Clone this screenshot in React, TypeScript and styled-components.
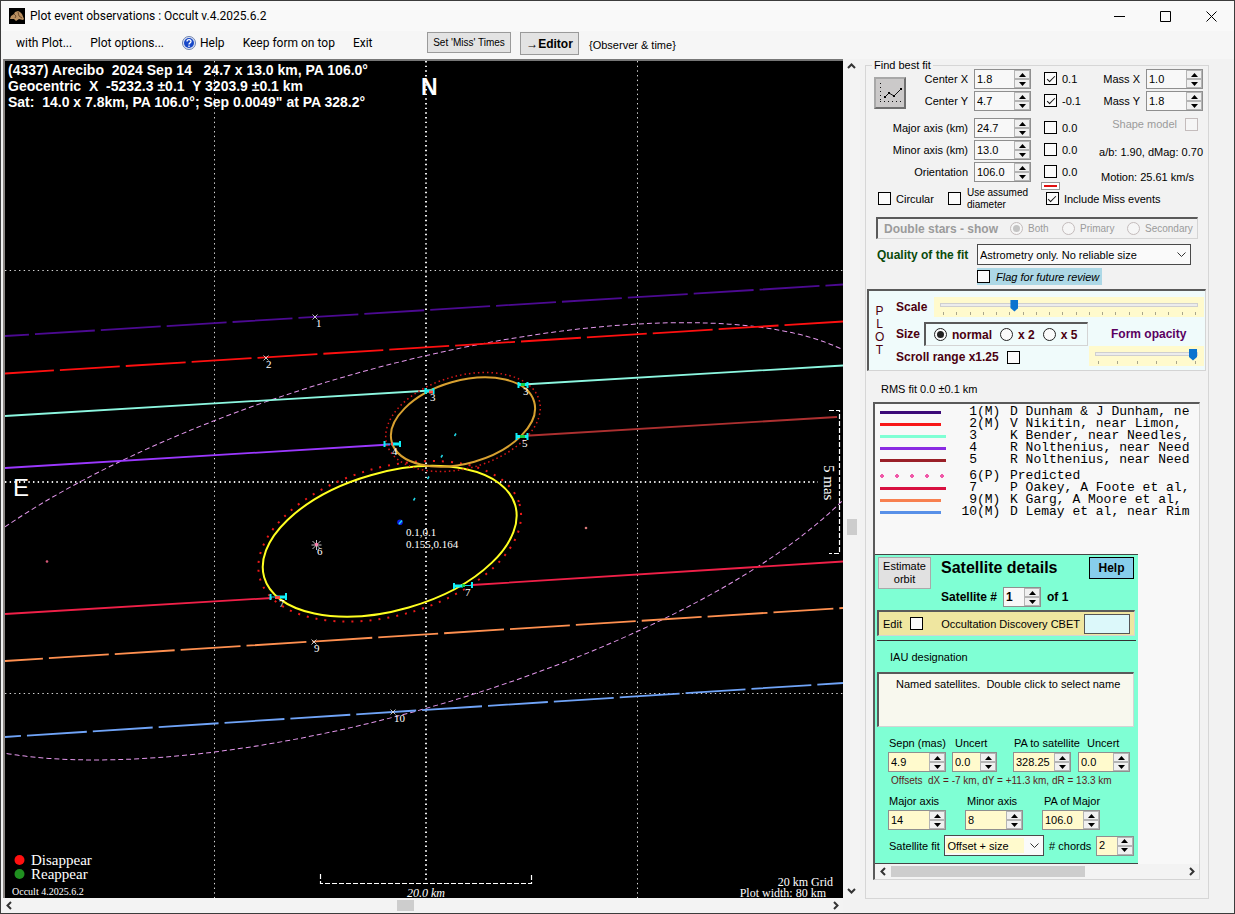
import React from "react";
import styled, { createGlobalStyle, css } from "styled-components";

const sans = '"Liberation Sans", Arial, sans-serif';
const serif = '"Liberation Serif", "Times New Roman", serif';
const mono = '"Liberation Mono", "Courier New", monospace';
const ui = 'Roboto, "Segoe UI", sans-serif';

const GlobalStyle = createGlobalStyle`
  *, *::before, *::after { box-sizing: border-box; }
  html, body { margin: 0; padding: 0; }
  body { background: #f2f2f2; color: #000; font: 11px/12px ${sans}; }
  button, input, select { font: inherit; color: inherit; margin: 0; }
`;

/* ---------- window frame ---------- */

const Window = styled.div`
  display: flex;
  flex-direction: column;
  min-height: 100vh;
  border: 1px solid #3c3c3c;
  background: #f2f2f2;
`;

const TitleBar = styled.header`
  display: flex;
  align-items: center;
  height: 30px;
  padding-left: 8px;
  background: #f9f9f9;
`;

const WindowTitle = styled.h1`
  flex: 1;
  margin: 0 0 0 5px;
  font: 400 12px/16px ${ui};
`;

const CaptionButton = styled.button`
  display: flex;
  align-items: center;
  justify-content: center;
  width: 46px;
  height: 28px;
  padding: 0;
  border: 0;
  background: transparent;
`;

const MenuBar = styled.div`
  display: flex;
  align-items: flex-start;
  height: 28px;
  background: #f6f6f6;
`;

const Menu = styled.nav`
  display: flex;
  gap: 18px;
  width: 426px;
  padding-left: 15px;
`;

const MenuItem = styled.button`
  display: flex;
  align-items: center;
  gap: 4px;
  height: 24px;
  padding: 0;
  border: 0;
  background: transparent;
  font: 12px/16px ${ui};
  white-space: nowrap;
`;

const ToolButton = styled.button<{ $strong?: boolean }>`
  height: ${(p) => (p.$strong ? 23 : 21)}px;
  width: ${(p) => (p.$strong ? 59 : 84)}px;
  margin: 1px 9px 0 0;
  padding: 0;
  border: 1px solid #9a9a9a;
  background: #e3e3e3;
  font: ${(p) => (p.$strong ? "700 12px" : "400 10px")} / 14px ${sans};
  white-space: nowrap;
`;

const MenuHint = styled.span`
  padding: 8px 0 0 1px;
`;

/* ---------- main area ---------- */

const Main = styled.main`
  display: flex;
  flex: 1;
`;

const PlotColumn = styled.section`
  display: grid;
  flex: 1;
  min-width: 0;
  grid-template-columns: minmax(0, 1fr) 17px;
  grid-template-rows: minmax(0, 1fr) 15px;
`;

const PlotFrame = styled.div`
  margin-left: 2px;
  border-top: 2px solid #777;
  border-left: 2px solid #8a8683;
  background: #000;
`;

const Chart = styled.svg`
  display: block;
  width: 100%;
  height: 100%;
  text { white-space: pre; fill: #fff; }
`;

const ScrollTrack = styled.div<{ $vertical?: boolean }>`
  display: flex;
  flex-direction: ${(p) => (p.$vertical ? "column" : "row")};
  align-items: center;
  background: #f3f3f3;
`;

const ScrollArrow = styled.button`
  display: flex;
  flex: none;
  align-items: center;
  justify-content: center;
  width: 16px;
  height: 15px;
  padding: 0;
  border: 0;
  background: transparent;
`;

const ScrollGap = styled.div<{ $grow: number }>`
  flex: ${(p) => p.$grow} 0 0;
`;

const Thumb = styled.div<{ $vertical?: boolean; $length: number }>`
  flex: none;
  width: ${(p) => (p.$vertical ? 10 : p.$length)}px;
  height: ${(p) => (p.$vertical ? p.$length : 11)}px;
  background: #cdcdcd;
`;

const Side = styled.aside`
  flex: none;
  padding: 2px 25px 12px 5px;
`;

const FitGroup = styled.fieldset`
  width: 344px;
  min-width: 0;
  margin: 0;
  padding: 0 2px 18px 1px;
  border: 1px solid #d6d6d6;
`;

const GroupLegend = styled.legend`
  margin-left: 5px;
  padding: 0 2px;
  line-height: 8px;
`;

/* ---------- controls ---------- */

const Spin = styled.span<{ $width: number; $tint?: string }>`
  display: flex;
  flex: none;
  width: ${(p) => p.$width}px;
  height: 20px;
  border: 1px solid #8f8f8f;
  background: ${(p) => p.$tint ?? "#f8f8f8"};
`;

const SpinInput = styled.input`
  flex: 1;
  min-width: 0;
  height: 17px;
  padding: 0 0 0 2px;
  border: 0;
  outline: 0;
  background: transparent;
`;

const SpinKeys = styled.span`
  display: flex;
  flex-direction: column;
  flex: none;
  width: 16px;
`;

const SpinKey = styled.button`
  display: flex;
  flex: 1;
  align-items: center;
  justify-content: center;
  padding: 0;
  border: 1px solid #b4b4b4;
  background: #f0f0f0;
`;

const boxLook = css`
  appearance: none;
  display: inline-grid;
  place-content: center;
  flex: none;
  width: 13px;
  height: 13px;
  border: 1px solid #000;
  background: #fbfbfb;
  &:disabled { border-color: #c4bcbc; background: #f6f6f6; }
`;

const CheckBox = styled.input.attrs({ type: "checkbox" })`
  ${boxLook}
  &:checked::before {
    content: "";
    width: 8px;
    height: 4px;
    border: solid #111;
    border-width: 0 0 1px 1px;
    transform: translateY(-1px) rotate(-45deg);
  }
`;

const Radio = styled.input.attrs({ type: "radio" })`
  ${boxLook}
  border-radius: 50%;
  border-color: #222;
  &:checked::before {
    content: "";
    width: 7px;
    height: 7px;
    border-radius: 50%;
    background: #222;
  }
  &:checked:disabled::before { background: #c4c4c4; }
`;

const Tick = styled.label<{ $gap?: number; $muted?: boolean }>`
  display: flex;
  align-items: center;
  gap: ${(p) => p.$gap ?? 5}px;
  white-space: nowrap;
  color: ${(p) => (p.$muted ? "#9b9b9b" : "inherit")};
`;

const Combo = styled.span<{ $width: number; $tint?: string }>`
  display: grid;
  flex: none;
  align-items: center;
  width: ${(p) => p.$width}px;
  height: 21px;
  border: 1px solid #4a4a4a;
  background: ${(p) =>
    p.$tint
      ? `linear-gradient(${p.$tint}, ${p.$tint}) 1px 2px / calc(100% - 20px) 15px no-repeat #fafafa`
      : "#fafafa"};
  > * { grid-area: 1 / 1; }
  > svg { justify-self: end; margin-right: 4px; pointer-events: none; }
`;

const ComboSelect = styled.select`
  appearance: none;
  width: 100%;
  height: 19px;
  padding: 0 2px;
  border: 0;
  outline: 0;
  background: transparent;
`;

const Sunken = css`
  border: 1px solid #d4d4d4;
  border-top: 2px solid #5a5a5a;
  border-left: 2px solid #5a5a5a;
`;

/* ---------- best-fit controls ---------- */

const FitGrid = styled.div`
  display: grid;
  grid-template-columns: 32px 62px 57px 52px 1fr;
  grid-template-rows: 20px 25px 20px 20px 20px;
  row-gap: 2px;
  padding: 0 3px 0 7px;
`;

const FitButton = styled.button`
  grid-column: 1;
  grid-row: 1 / 3;
  align-self: center;
  width: 32px;
  height: 32px;
  padding: 0;
  border: 2px solid;
  border-color: #a8a8a8 #6f6f6f #6f6f6f #a8a8a8;
  background: #cbc9c9;
`;

const FieldLabel = styled.label<{ $wide?: boolean }>`
  grid-column: ${(p) => (p.$wide ? "1 / 3" : "2")};
  justify-self: end;
  line-height: 20px;
  white-space: nowrap;
`;

const FitSpin = styled.div`
  grid-column: 3;
  margin-left: 6px;
`;

const FitCheck = styled.div`
  display: flex;
  grid-column: 4;
  height: 19px;
  margin-left: 19px;
`;

const FitExtra = styled.div<{ $drop?: number }>`
  display: flex;
  grid-column: 5;
  align-items: center;
  justify-content: flex-end;
  gap: 6px;
  height: 20px;
  margin-top: ${(p) => p.$drop ?? 0}px;
  white-space: nowrap;
`;

const ShapeLabel = styled(Tick)`
  padding: 0 5px 8px 0;
`;

const Motion = styled.span`
  padding-right: 9px;
`;

const OptionRow = styled.div`
  display: flex;
  align-items: flex-end;
  height: 29px;
  padding-left: 11px;
  > label { height: 25px; }
`;

const AssumedOption = styled(Tick)`
  width: 93px;
  margin-left: 14px;
  font-size: 10px;
  white-space: normal;
`;

const MissOption = styled.div`
  display: flex;
  flex-direction: column;
  align-self: flex-start;
  gap: 2px;
`;

const MissTick = styled(Tick)`
  padding-left: 5px;
`;

const LineSwatch = styled.span`
  flex: none;
  width: 19px;
  height: 8px;
  border: 1px solid #999;
  background: linear-gradient(#e01010, #e01010) center / 13px 2px no-repeat #fff;
`;

const DoubleStars = styled.div`
  ${Sunken}
  display: flex;
  align-items: center;
  height: 22px;
  margin: 6px 8px 0 9px;
  padding-left: 6px;
  color: #9b9b9b;
  strong { width: 126px; font-size: 12px; white-space: nowrap; }
  label { font-size: 10px; }
`;

const RadioSlot = styled(Tick)<{ $width: number }>`
  width: ${(p) => p.$width}px;
`;

const QualityRow = styled.div`
  display: flex;
  align-items: center;
  justify-content: space-between;
  margin: 5px 15px 0 10px;
  label { color: #0b4a0b; font-weight: 700; font-size: 12px; white-space: nowrap; }
`;

const FlagOption = styled(Tick)`
  width: 125px;
  height: 17px;
  margin: 3px 0 0 110px;
  background: #add8e6;
  font-style: italic;
`;

/* ---------- plot settings ---------- */

const PlotPanel = styled.section`
  ${Sunken}
  display: grid;
  grid-template-columns: 27px 1fr;
  height: 82px;
  margin-top: 4px;
  background: #f0fbfb;
  color: #4b0010;
  font-weight: 700;
  font-size: 12px;
`;

const PlotLetters = styled.div`
  width: 15px;
  padding: 14px 0 0 6px;
  text-align: center;
  font-weight: 400;
  line-height: 13px;
  word-break: break-all;
`;

const PlotRows = styled.div`
  display: grid;
  grid-template-columns: 193px 1fr;
  grid-template-rows: 25px 24px 22px;
  padding: 6px 1px 0 0;
`;

const ScaleRow = styled.div`
  display: flex;
  grid-column: 1 / 3;
  align-items: flex-start;
  justify-content: space-between;
  > label { line-height: 20px; }
`;

const PlotRow = styled.div`
  display: flex;
  align-items: center;
`;

const SizeBox = styled.div`
  ${Sunken}
  display: flex;
  align-items: center;
  gap: 8px;
  width: 164px;
  height: 24px;
  margin-left: 4px;
  padding-left: 8px;
`;

const OpacityTitle = styled.label`
  align-self: center;
  padding-left: 22px;
  color: #5a0060;
`;

const SliderBox = styled.div<{ $width: number }>`
  display: flex;
  flex: none;
  flex-direction: column;
  width: ${(p) => p.$width}px;
  height: 20px;
  padding: 0 6px;
  background: #fffacd;
`;

const Slider = styled.input.attrs({ type: "range" })`
  appearance: none;
  width: 100%;
  height: 15px;
  background: transparent;
  &::-webkit-slider-runnable-track {
    height: 4px;
    border: 1px solid #cfcfcf;
    background: #ececec;
  }
  &::-webkit-slider-thumb {
    appearance: none;
    width: 8px;
    height: 12px;
    margin-top: -4px;
    background: #0b73cf;
    clip-path: polygon(0 0, 100% 0, 100% 70%, 50% 100%, 0 70%);
  }
`;

const Ticks = styled.div`
  display: flex;
  justify-content: space-between;
  padding: 0 2px 0 3px;
  span { width: 1px; height: 3px; background: #a9a68c; }
`;

/* ---------- observer list and satellite panel ---------- */

const RmsText = styled.p`
  margin: 12px 0 7px 14px;
`;

const ListPane = styled.section`
  ${Sunken}
  margin: 0 6px;
  background: #f8f8f8;
`;

const Observers = styled.ul`
  height: 150px;
  margin: 0;
  padding: 2px 0 0 5px;
  overflow: hidden;
  list-style: none;
  font: 13px/12px ${mono};
  white-space: nowrap;
`;

const Observer = styled.li<{ $spaced?: boolean }>`
  display: grid;
  grid-template-columns: 81px 16px 33px 1fr;
  align-items: center;
  height: 12px;
  margin-top: ${(p) => (p.$spaced ? 4 : 0)}px;
`;

const ObserverNumber = styled.span`
  justify-self: end;
`;

const Stroke = styled.span<{ $color: string; $length: number; $dots?: boolean }>`
  width: ${(p) => p.$length}px;
  height: ${(p) => (p.$dots ? 4 : 3)}px;
  background: ${(p) =>
    p.$dots ? `radial-gradient(circle at 2px 2px, ${p.$color} 2px, transparent 2px) 0 0 / 15px 4px` : p.$color};
`;

const Satellite = styled.section`
  width: 263px;
  padding: 2px 2px 7px;
  border-top: 1px solid #444;
  border-bottom: 1px solid #444;
  background: #7fffd4;
`;

const SatHeader = styled.div`
  display: flex;
  align-items: flex-start;
  height: 50px;
  padding: 0 2px 0 1px;
`;

const EstimateButton = styled.button`
  width: 53px;
  height: 32px;
  padding: 0 4px;
  border: 1px solid #a9a9a9;
  background: #e1e1e1;
  line-height: 13px;
`;

const SatTitles = styled.div`
  flex: 1;
  padding-left: 10px;
  h2 { margin: 0 0 8px; font: 700 16px/22px ${sans}; white-space: nowrap; }
`;

const SatNumber = styled.div`
  display: flex;
  align-items: center;
  gap: 6px;
  font-weight: 700;
  font-size: 12px;
`;

const HelpButton = styled.button`
  width: 45px;
  height: 22px;
  padding: 0;
  border: 1px solid #000;
  background: #87ceeb;
  font-weight: 700;
  font-size: 12px;
`;

const EditBar = styled.div`
  ${Sunken}
  display: flex;
  align-items: center;
  height: 26px;
  margin: 3px 1px 0 0;
  padding: 0 4px;
  background: #efe6a0;
`;

const CbetLabel = styled.label`
  margin-left: auto;
  white-space: nowrap;
`;

const CbetInput = styled.input`
  width: 46px;
  height: 20px;
  margin-left: 4px;
  border: 1px solid #555;
  background: #dcf8fa;
`;

const Rule = styled.hr`
  height: 1px;
  margin: 4px 0 0;
  border: 0;
  background: #333;
`;

const Iau = styled.p`
  margin: 10px 0 9px 13px;
`;

const NamedBox = styled.div`
  ${Sunken}
  display: flex;
  gap: 6px;
  height: 55px;
  margin-right: 2px;
  padding: 4px 0 0 17px;
  background: #f8f8ee;
  white-space: nowrap;
`;

const FieldGrid = styled.div<{ $columns: string; $top: number }>`
  display: grid;
  grid-template-columns: ${(p) => p.$columns};
  margin: ${(p) => p.$top}px 0 0 11px;
`;

const Stacked = styled.div<{ $inset?: number }>`
  display: flex;
  flex-direction: column;
  gap: 3px;
  label { padding-left: ${(p) => p.$inset ?? 1}px; white-space: nowrap; }
`;

const Offsets = styled.p`
  margin: 3px 0 0 14px;
  color: #5c1a1a;
  font-size: 10px;
  white-space: pre;
`;

const FitRow = styled.div`
  display: flex;
  align-items: center;
  justify-content: space-between;
  margin: 5px 2px 0 12px;
`;

/* ---------- small parts ---------- */

const cream = "#fffacd";

function Spinner({ id, value, width, tint }: { id: string; value: string; width: number; tint?: string }) {
  return (
    <Spin $width={width} $tint={tint}>
      <SpinInput id={id} defaultValue={value} />
      <SpinKeys>
        <SpinKey type="button" aria-label="Increase">
          <svg width="7" height="4"><path d="M0 4L3.5 0L7 4Z" /></svg>
        </SpinKey>
        <SpinKey type="button" aria-label="Decrease">
          <svg width="7" height="4"><path d="M0 0L3.5 4L7 0Z" /></svg>
        </SpinKey>
      </SpinKeys>
    </Spin>
  );
}

const arrows = {
  up: "M1 6L4.5 2.5L8 6",
  down: "M1 3L4.5 6.5L8 3",
  left: "M6 1L2.5 4.5L6 8",
  right: "M3 1L6.5 4.5L3 8",
};

function Arrow({ to }: { to: keyof typeof arrows }) {
  return (
    <ScrollArrow type="button" aria-label={`Scroll ${to}`}>
      <svg width="9" height="9"><path d={arrows[to]} fill="none" stroke="#333" strokeWidth="2" /></svg>
    </ScrollArrow>
  );
}

function ComboBox({ id, value, width, tint }: { id: string; value: string; width: number; tint?: string }) {
  return (
    <Combo $width={width} $tint={tint}>
      <ComboSelect id={id}><option>{value}</option></ComboSelect>
      <svg width="9" height="6"><path d="M0.5 0.5L4.5 4.5L8.5 0.5" fill="none" stroke="#333" /></svg>
    </Combo>
  );
}

/* ---------- sky plot ---------- */

const tracks = [
  { c: "#4c0a92", d: "M5 336L843 284.5", dash: 36 },
  { c: "#ff1010", d: "M5 373.5L843 321.5", dash: 11 },
  { c: "#8cf7e0", d: "M5 416L430 390.5M523 384.5L843 365.5" },
  { c: "#9b38ff", d: "M5 468L390 444.5" },
  { c: "#ad3030", d: "M522 436L837 417" },
  { c: "#f02048", d: "M5 614L272 598M472 585L843 561.5" },
  { c: "#ff9050", d: "M5 661L843 608", dash: 22 },
  { c: "#70a4f8", d: "M5 737L843 683", dash: 44 },
];

const chordLabels: [string, number, number][] = [
  ["1", 316, 327], ["2", 266, 368], ["3", 430, 401], ["3", 523, 395], ["4", 392, 455], ["5", 522, 447],
  ["6", 317, 555], ["7", 279, 607], ["7", 465, 596], ["9", 314, 652], ["10", 394, 722],
];

const missMarks = [[315, 317], [266, 358], [314, 642], [393, 712]];

function SkyPlot() {
  return (
    <Chart viewBox="5 61 838 837" role="img" aria-label="Occultation chords">
      <g stroke="#d8d8d8" strokeDasharray="1.4 3.27">
        <path d="M214.5 61V898M637.5 61V898M5 270.5H843M5 693.5H843" />
        <path d="M426 61V883M5 482H818" stroke="#eee" strokeWidth="2" />
      </g>
      <ellipse cx="389.7" cy="541.3" rx="519" ry="170.6" transform="rotate(-16.2 389.7 541.3)" fill="none" stroke="#e296ea" strokeDasharray="5 3" />
      {tracks.map((t) => (
        <path key={t.d} d={t.d} stroke={t.c} strokeWidth="1.8" strokeDasharray={t.dash ? "60 6" : undefined} strokeDashoffset={t.dash} />
      ))}
      <g fill="none" strokeWidth="2">
        <g transform="rotate(-16 389.7 541.3)">
          <ellipse cx="389.7" cy="541.3" rx="130.6" ry="68.8" stroke="#ffff20" />
          <ellipse cx="389.7" cy="541.3" rx="135" ry="74" stroke="#e81818" strokeDasharray="2 7" />
        </g>
        <g transform="rotate(-16 463 422)">
          <ellipse cx="463" cy="422" rx="74" ry="41.3" stroke="#d8a030" />
          <ellipse cx="463" cy="422" rx="79.3" ry="46.2" stroke="#d81818" strokeWidth="1.5" strokeDasharray="1.5 3" />
        </g>
      </g>
      <path d="M425 391H434M518 384.5H528M392 444H400M516 436.5H528M276 597H286M454 586H463" stroke="#10f0f8" strokeWidth="3" />
      <path d="M384 444H392M270 597H276M463 585.5H472" stroke="#10d0e0" strokeWidth="1" />
      <path d="M425.5 388V394M433.5 388V394M518.5 382V388M527.5 382V388M384.5 441V447M400 441V447M516.5 433V440M527.5 433V440M270.5 594V600M286 593V600M454 583V589M472 582V588" stroke="#10f0f8" strokeWidth="2" />
      <path d="M429 392H433M391 444H393M275 597.5H280" stroke="#ff5040" strokeWidth="3" />
      <path d="M521 384.5H525M520 436.5H525M462 585.5H465" stroke="#18d048" strokeWidth="3" />
      <g stroke="#d8d8d8" strokeWidth="0.9">
        {missMarks.map(([x, y]) => (
          <path key={x} d={`M${x - 2.5} ${y - 2.5}l5 5M${x + 2.5} ${y - 2.5}l-5 5`} />
        ))}
        <path d="M316.5 540V550M311.5 545H321.5M312.5 541L320.5 549M320.5 541L312.5 549" />
      </g>
      <circle cx="316.5" cy="544.5" r="1.7" fill="#ff80b0" />
      <circle cx="400" cy="522.3" r="2.8" fill="#0820e8" />
      <path d="M399 524L402 520.5M413.5 500.5L415 498M427.5 479L429 476.5M441 457.5L442.5 455M454.5 436L456 433.5" stroke="#20d8e8" strokeWidth="1.5" />
      <circle cx="47" cy="561.5" r="1.3" fill="#d85878" />
      <circle cx="586" cy="528" r="1.3" fill="#d87878" />
      <path d="M320.5 874V883.5H531.5V874M829 410.5H839.5V553.5H829" fill="none" stroke="#fff" strokeWidth="1.2" strokeDasharray="5 2" />
      <g fontFamily={sans} fontWeight="700" fontSize="14">
        <text x="8" y="75">(4337) Arecibo  2024 Sep 14   24.7 x 13.0 km, PA 106.0°</text>
        <text x="8" y="91">Geocentric  X  -5232.3 ±0.1  Y 3203.9 ±0.1 km</text>
        <text x="8" y="107">Sat:  14.0 x 7.8km, PA 106.0°; Sep 0.0049" at PA 328.2°</text>
        <text x="421" y="95" fontSize="23">N</text>
        <text x="13" y="496" fontSize="24" fontWeight="400">E</text>
      </g>
      <g fontFamily={serif} fontSize="11">
        {chordLabels.map(([n, x, y], i) => <text key={i} x={x} y={y}>{n}</text>)}
        <text x="406" y="536">0.1,0.1</text>
        <text x="406" y="548">0.155,0.164</text>
      </g>
      <circle cx="19.5" cy="860" r="5" fill="#ff1010" />
      <circle cx="19.5" cy="874" r="5" fill="#209020" />
      <g fontFamily={serif} fontSize="15">
        <text x="31" y="865">Disappear</text>
        <text x="31" y="879">Reappear</text>
        <text x="12" y="895" fontSize="10">Occult 4.2025.6.2</text>
        <text x="407" y="897" fontSize="12" fontStyle="italic">20.0 km</text>
        <text x="833" y="886" fontSize="12" textAnchor="end">20 km Grid</text>
        <text x="826" y="897" fontSize="12" textAnchor="end">Plot width: 80 km</text>
        <text transform="translate(824 465) rotate(90)">5 mas</text>
      </g>
    </Chart>
  );
}

/* ---------- data ---------- */

const fits = [
  { id: "cx", label: "Center X", value: "1.8", delta: "0.1", on: true },
  { id: "cy", label: "Center Y", value: "4.7", delta: "-0.1", on: true },
  { id: "major", label: "Major axis (km)", value: "24.7", delta: "0.0", on: false },
  { id: "minor", label: "Minor axis (km)", value: "13.0", delta: "0.0", on: false },
  { id: "pa", label: "Orientation", value: "106.0", delta: "0.0", on: false },
];

const observers = [
  { n: 1, tag: "(M)", name: "D Dunham & J Dunham, ne", c: "#3c0a78", w: 61 },
  { n: 2, tag: "(M)", name: "V Nikitin, near Limon,", c: "#f81818", w: 61 },
  { n: 3, tag: "", name: "K Bender, near Needles,", c: "#7fffd4", w: 66 },
  { n: 4, tag: "", name: "R Nolthenius, near Need", c: "#8a2be2", w: 66 },
  { n: 5, tag: "", name: "R Nolthenius, near Need", c: "#9a2028", w: 66 },
  { n: 6, tag: "(P)", name: "Predicted", c: "#f058a8", w: 65 },
  { n: 7, tag: "", name: "P Oakey, A Foote et al,", c: "#d81040", w: 66 },
  { n: 9, tag: "(M)", name: "K Garg, A Moore et al,", c: "#f88050", w: 61 },
  { n: 10, tag: "(M)", name: "D Lemay et al, near Rim", c: "#5890e8", w: 61 },
];

export default function App() {
  return (
    <>
      <GlobalStyle />
      <Window>
        <TitleBar>
          <svg width="16" height="16" aria-hidden="true">
            <rect width="16" height="16" />
            <path d="M1 11L2 8L5 6L6 4L9 3L11 4L13 6L15 11L14 12L10 11L7 13L5 11Z" fill="#b98f60" />
            <path d="M5 6L7 8L6 10M9 4L10 8L13 10" stroke="#6e4c2c" fill="none" />
          </svg>
          <WindowTitle>Plot event observations : Occult v.4.2025.6.2</WindowTitle>
          <CaptionButton aria-label="Minimize"><svg width="11" height="11"><path d="M0 5.5H11" stroke="#000" /></svg></CaptionButton>
          <CaptionButton aria-label="Maximize"><svg width="11" height="11"><path d="M0.5 0.5H10.5V10.5H0.5Z" fill="none" stroke="#000" /></svg></CaptionButton>
          <CaptionButton aria-label="Close"><svg width="11" height="11"><path d="M0.5 0.5L10.5 10.5M10.5 0.5L0.5 10.5" stroke="#000" /></svg></CaptionButton>
        </TitleBar>
        <MenuBar>
          <Menu>
            <MenuItem>with Plot...</MenuItem>
            <MenuItem>Plot options...</MenuItem>
            <MenuItem>
              <svg width="14" height="14" aria-hidden="true">
                <circle cx="7" cy="7" r="6.5" fill="#dfe6f4" stroke="#6b7fae" />
                <circle cx="7" cy="7" r="5" fill="#1848c8" />
                <path d="M5 5.5C5 3 9 3 9 5.5C9 7 7 6.8 7 8.5M7 9.5V11" fill="none" stroke="#fff" strokeWidth="1.3" />
              </svg>
              Help
            </MenuItem>
            <MenuItem>Keep form on top</MenuItem>
            <MenuItem>Exit</MenuItem>
          </Menu>
          <ToolButton>Set 'Miss' Times</ToolButton>
          <ToolButton $strong>→Editor</ToolButton>
          <MenuHint>{"{Observer & time}"}</MenuHint>
        </MenuBar>
        <Main>
          <PlotColumn>
            <PlotFrame><SkyPlot /></PlotFrame>
            <ScrollTrack $vertical>
              <Arrow to="up" />
              <ScrollGap $grow={444} />
              <Thumb $vertical $length={16} />
              <ScrollGap $grow={348} />
              <Arrow to="down" />
            </ScrollTrack>
            <ScrollTrack>
              <Arrow to="left" />
              <ScrollGap $grow={380} />
              <Thumb $length={17} />
              <ScrollGap $grow={413} />
              <Arrow to="right" />
            </ScrollTrack>
          </PlotColumn>
          <Side>
            <FitGroup>
              <GroupLegend>Find best fit</GroupLegend>
              <FitGrid>
                <FitButton aria-label="Fit to observations">
                  <svg width="26" height="26">
                    <path d="M3.5 4V23M3 22.5H25" stroke="#111" strokeDasharray="1 3" />
                    <path d="M8 18L12 14L17 17L24 10" fill="none" stroke="#111" />
                    <path d="M7 17h2v2h-2zM11 13h2v2h-2zM16 16h2v2h-2zM23 9h2v2h-2z" />
                  </svg>
                </FitButton>
                {fits.map((f, i) => (
                  <React.Fragment key={f.id}>
                    <FieldLabel htmlFor={f.id} $wide={i > 1} style={{ gridRow: i + 1 }}>{f.label}</FieldLabel>
                    <FitSpin style={{ gridRow: i + 1 }}><Spinner id={f.id} value={f.value} width={57} /></FitSpin>
                    <FitCheck style={{ gridRow: i + 1 }}>
                      <Tick><CheckBox defaultChecked={f.on} />{f.delta}</Tick>
                    </FitCheck>
                  </React.Fragment>
                ))}
                <FitExtra style={{ gridRow: 1 }}><label htmlFor="mx">Mass X</label><Spinner id="mx" value="1.0" width={57} /></FitExtra>
                <FitExtra style={{ gridRow: 2 }}><label htmlFor="my">Mass Y</label><Spinner id="my" value="1.8" width={57} /></FitExtra>
                <FitExtra style={{ gridRow: 3 }}>
                  <ShapeLabel $muted $gap={8}>Shape model<CheckBox disabled /></ShapeLabel>
                </FitExtra>
                <FitExtra $drop={2} style={{ gridRow: 4 }}>a/b: 1.90, dMag: 0.70</FitExtra>
                <FitExtra $drop={5} style={{ gridRow: 5 }}><Motion>Motion: 25.61 km/s</Motion></FitExtra>
              </FitGrid>
              <OptionRow>
                <Tick><CheckBox />Circular</Tick>
                <AssumedOption $gap={6}><CheckBox />Use assumed diameter</AssumedOption>
                <MissOption>
                  <LineSwatch />
                  <MissTick><CheckBox defaultChecked />Include Miss events</MissTick>
                </MissOption>
              </OptionRow>
              <DoubleStars>
                <strong>Double stars - show</strong>
                <RadioSlot $width={52}><Radio name="pair" disabled defaultChecked />Both</RadioSlot>
                <RadioSlot $width={65}><Radio name="pair" disabled />Primary</RadioSlot>
                <RadioSlot $width={65}><Radio name="pair" disabled />Secondary</RadioSlot>
              </DoubleStars>
              <QualityRow>
                <label htmlFor="quality">Quality of the fit</label>
                <ComboBox id="quality" value="Astrometry only. No reliable size" width={214} />
              </QualityRow>
              <FlagOption $gap={6}><CheckBox />Flag for future review</FlagOption>
              <PlotPanel>
                <PlotLetters>PLOT</PlotLetters>
                <PlotRows>
                  <ScaleRow>
                    <label htmlFor="scale">Scale</label>
                    <SliderBox $width={270}>
                      <Slider id="scale" min={0} max={100} defaultValue={28} />
                      <Ticks>{Array.from({ length: 20 }, (_, i) => <span key={i} />)}</Ticks>
                    </SliderBox>
                  </ScaleRow>
                  <PlotRow>
                    Size
                    <SizeBox>
                      <Tick><Radio name="size" defaultChecked />normal</Tick>
                      <Tick><Radio name="size" />x 2</Tick>
                      <Tick><Radio name="size" />x 5</Tick>
                    </SizeBox>
                  </PlotRow>
                  <OpacityTitle htmlFor="opacity">Form opacity</OpacityTitle>
                  <PlotRow>
                    <Tick $gap={8}>Scroll range x1.25<CheckBox /></Tick>
                  </PlotRow>
                  <SliderBox $width={115}>
                    <Slider id="opacity" min={0} max={100} defaultValue={100} />
                    <Ticks>{Array.from({ length: 6 }, (_, i) => <span key={i} />)}</Ticks>
                  </SliderBox>
                </PlotRows>
              </PlotPanel>
              <RmsText>RMS fit  0.0 ±0.1 km</RmsText>
              <ListPane>
                <Observers>
                  {observers.map((o) => (
                    <Observer key={o.n} $spaced={o.n === 6}>
                      <Stroke $color={o.c} $length={o.w} $dots={o.n === 6} />
                      <ObserverNumber>{o.n}</ObserverNumber>
                      <span>{o.tag}</span>
                      <span>{o.name}</span>
                    </Observer>
                  ))}
                </Observers>
                <Satellite>
                  <SatHeader>
                    <EstimateButton>Estimate orbit</EstimateButton>
                    <SatTitles>
                      <h2>Satellite details</h2>
                      <SatNumber>
                        <label htmlFor="sat">Satellite #</label>
                        <Spinner id="sat" value="1" width={38} />
                        <span>of 1</span>
                      </SatNumber>
                    </SatTitles>
                    <HelpButton>Help</HelpButton>
                  </SatHeader>
                  <EditBar>
                    <Tick $gap={8}>Edit<CheckBox /></Tick>
                    <CbetLabel htmlFor="cbet">Occultation Discovery CBET</CbetLabel>
                    <CbetInput id="cbet" />
                  </EditBar>
                  <Rule />
                  <Iau>IAU designation</Iau>
                  <NamedBox><span>Named satellites.</span><span>Double click to select name</span></NamedBox>
                  <FieldGrid $columns="64px 61px 65px 52px" $top={10}>
                    <Stacked><label htmlFor="sepn">Sepn (mas)</label><Spinner id="sepn" value="4.9" width={58} tint={cream} /></Stacked>
                    <Stacked $inset={3}><label htmlFor="sepnU">Uncert</label><Spinner id="sepnU" value="0.0" width={45} tint={cream} /></Stacked>
                    <Stacked><label htmlFor="paSat">PA to satellite</label><Spinner id="paSat" value="328.25" width={58} tint={cream} /></Stacked>
                    <Stacked $inset={9}><label htmlFor="paU">Uncert</label><Spinner id="paU" value="0.0" width={52} tint={cream} /></Stacked>
                  </FieldGrid>
                  <Offsets>Offsets  dX = -7 km, dY = +11.3 km, dR = 13.3 km</Offsets>
                  <FieldGrid $columns="77px 77px 58px" $top={8}>
                    <Stacked><label htmlFor="satMajor">Major axis</label><Spinner id="satMajor" value="14" width={58} tint={cream} /></Stacked>
                    <Stacked $inset={2}><label htmlFor="satMinor">Minor axis</label><Spinner id="satMinor" value="8" width={58} tint={cream} /></Stacked>
                    <Stacked $inset={2}><label htmlFor="satPa">PA of Major</label><Spinner id="satPa" value="106.0" width={58} tint={cream} /></Stacked>
                  </FieldGrid>
                  <FitRow>
                    <label htmlFor="satFit">Satellite fit</label>
                    <ComboBox id="satFit" value="Offset + size" width={100} tint={cream} />
                    <label htmlFor="chords"># chords</label>
                    <Spinner id="chords" value="2" width={38} tint={cream} />
                  </FitRow>
                </Satellite>
                <ScrollTrack>
                  <Arrow to="left" />
                  <Thumb $length={194} />
                  <ScrollGap $grow={1} />
                  <Arrow to="right" />
                </ScrollTrack>
              </ListPane>
            </FitGroup>
          </Side>
        </Main>
      </Window>
    </>
  );
}
